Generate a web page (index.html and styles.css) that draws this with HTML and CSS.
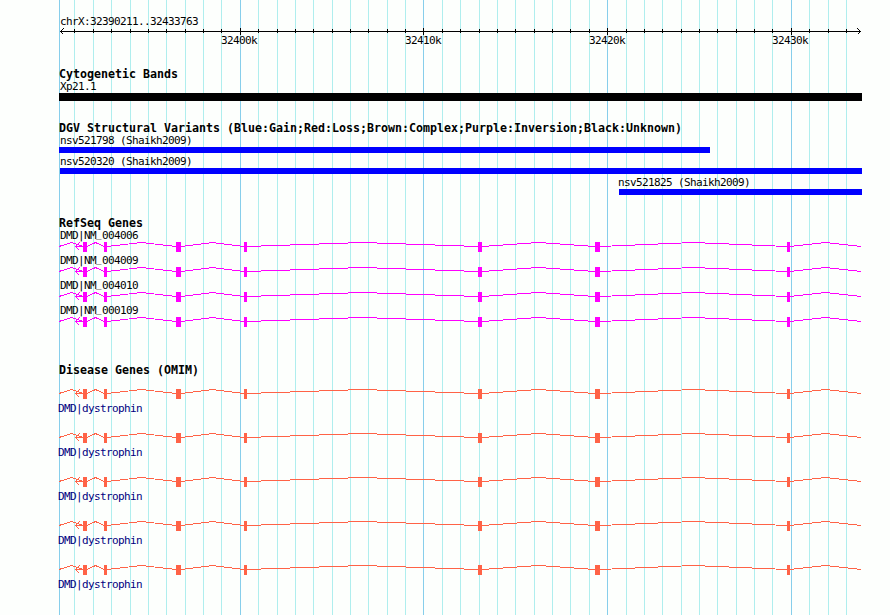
FILE: index.html
```
<!DOCTYPE html>
<html lang="en">
<head>
    <meta charset="UTF-8">
    <title>chrX:32390211..32433763</title>
    <link rel="stylesheet" href="styles.css">
</head>
<body>
    <!-- gene model shared by the RefSeq and OMIM tracks -->
    <svg class="defs" width="0" height="0">
        <symbol id="gene" viewBox="0 0 803 10">
            <path class="intron" d="M0 4.5L12.5 .5L24 4.5M28 4.5L36.5 .5L45 4.5M48 4.5L82.5 .5L117 4.5M122 4.5L153.5 .5L185 4.5M188 4.5L303.5 .5L419 4.5M423 4.5L479.5 .5L536 4.5M541 4.5L634.5 .5L728 4.5M731 4.5L766.5 .5L802 4.5"/>
            <path class="intron" d="M24 4.5H16.5M20.5 .5L16.5 4.5L20.5 8.5"/>
            <path class="exon" d="M24 0h4v10h-4zM45 0h3v10h-3zM117 0h5v10h-5zM185 0h3v10h-3zM419 0h4v10h-4zM536 0h5v10h-5zM728 0h3v10h-3z"/>
        </symbol>
    </svg>

    <div class="browser">
        <svg class="grid" width="890" height="615">
            <path class="minor" d="M74.5 0v615M93.5 0v615M111.5 0v615M130.5 0v615M148.5 0v615M166.5 0v615M185.5 0v615M203.5 0v615M221.5 0v615M258.5 0v615M277.5 0v615M295.5 0v615M313.5 0v615M332.5 0v615M350.5 0v615M368.5 0v615M387.5 0v615M405.5 0v615M442.5 0v615M460.5 0v615M479.5 0v615M497.5 0v615M515.5 0v615M534.5 0v615M552.5 0v615M570.5 0v615M589.5 0v615M626.5 0v615M644.5 0v615M662.5 0v615M681.5 0v615M699.5 0v615M717.5 0v615M736.5 0v615M754.5 0v615M772.5 0v615M809.5 0v615M828.5 0v615M846.5 0v615"/>
            <path class="major" d="M59.5 0v615M240.5 0v615M423.5 0v615M607.5 0v615M791.5 0v615"/>
        </svg>

        <div class="tracks">
            <div class="ruler">
                <div class="label">chrX:32390211..32433763</div>
                <svg class="axis" width="803" height="7">
                    <path d="M1 3.5H802M4.5 .5L1.5 3.5L4.5 6.5M798.5 .5L801.5 3.5L798.5 6.5"/>
                    <path d="M15.5 1v4M34.5 1v4M52.5 1v4M71.5 1v4M89.5 1v4M107.5 1v4M126.5 1v4M144.5 1v4M162.5 1v4M199.5 1v4M218.5 1v4M236.5 1v4M254.5 1v4M273.5 1v4M291.5 1v4M309.5 1v4M328.5 1v4M346.5 1v4M383.5 1v4M401.5 1v4M420.5 1v4M438.5 1v4M456.5 1v4M475.5 1v4M493.5 1v4M511.5 1v4M530.5 1v4M567.5 1v4M585.5 1v4M603.5 1v4M622.5 1v4M640.5 1v4M658.5 1v4M677.5 1v4M695.5 1v4M713.5 1v4M750.5 1v4M769.5 1v4M787.5 1v4"/>
                    <path d="M181.5 0v7M364.5 0v7M548.5 0v7M732.5 0v7"/>
                </svg>
                <div class="ticks">
                    <span>32400k</span>
                    <span>32410k</span>
                    <span>32420k</span>
                    <span>32430k</span>
                </div>
            </div>

            <div class="track bands">
                <h2>Cytogenetic Bands</h2>
                <div class="label">Xp21.1</div>
                <div class="band"></div>
            </div>

            <div class="track variants">
                <h2>DGV Structural Variants (Blue:Gain;Red:Loss;Brown:Complex;Purple:Inversion;Black:Unknown)</h2>
                <div class="variant nsv521798">
                    <div class="label">nsv521798 (Shaikh2009)</div>
                    <div class="gain"></div>
                </div>
                <div class="variant nsv520320">
                    <div class="label">nsv520320 (Shaikh2009)</div>
                    <div class="gain"></div>
                </div>
                <div class="variant nsv521825">
                    <div class="label">nsv521825 (Shaikh2009)</div>
                    <div class="gain"></div>
                </div>
            </div>

            <div class="track refseq">
                <h2>RefSeq Genes</h2>
                <div class="gene">
                    <div class="label">DMD|NM<span class="low">_</span>004006</div>
                    <svg width="803" height="10"><use href="#gene"/></svg>
                </div>
                <div class="gene">
                    <div class="label">DMD|NM<span class="low">_</span>004009</div>
                    <svg width="803" height="10"><use href="#gene"/></svg>
                </div>
                <div class="gene">
                    <div class="label">DMD|NM<span class="low">_</span>004010</div>
                    <svg width="803" height="10"><use href="#gene"/></svg>
                </div>
                <div class="gene">
                    <div class="label">DMD|NM<span class="low">_</span>000109</div>
                    <svg width="803" height="10"><use href="#gene"/></svg>
                </div>
            </div>

            <div class="track omim">
                <h2>Disease Genes (OMIM)</h2>
                <div class="gene">
                    <svg width="803" height="10"><use href="#gene"/></svg>
                    <div class="label">DMD|dystrophin</div>
                </div>
                <div class="gene">
                    <svg width="803" height="10"><use href="#gene"/></svg>
                    <div class="label">DMD|dystrophin</div>
                </div>
                <div class="gene">
                    <svg width="803" height="10"><use href="#gene"/></svg>
                    <div class="label">DMD|dystrophin</div>
                </div>
                <div class="gene">
                    <svg width="803" height="10"><use href="#gene"/></svg>
                    <div class="label">DMD|dystrophin</div>
                </div>
                <div class="gene">
                    <svg width="803" height="10"><use href="#gene"/></svg>
                    <div class="label">DMD|dystrophin</div>
                </div>
            </div>
        </div>
    </div>
</body>
</html>
```
FILE: styles.css
```
body {
    margin: 0;
    background: #fdfffd;
    color: #000;
    font-family: 'DejaVu Sans Mono', monospace;
    font-size: 11px;
    line-height: 12px;
    letter-spacing: -0.622px;
}
svg {
    display: block;
    shape-rendering: crispEdges;
}
.defs {
    position: absolute;
}
.browser {
    display: grid;
    width: 890px;
    height: 615px;
    overflow: hidden;
}
/* grid lines and tracks share one cell, the lines run behind */
.grid, .tracks {
    grid-area: 1 / 1;
}
.minor {
    stroke: #afeeee;
}
.major {
    stroke: #87ceeb;
}
.tracks {
    width: 803px;
    padding: 16px 0 0 59px;
}
.label {
    height: 12px;
    padding-left: 1px;
    white-space: nowrap;
}
/* keeps the underscore clear of the intron line below */
.low {
    font-size: 9px;
    line-height: 0;
    letter-spacing: 0.58px;
    vertical-align: 1px;
}
h2 {
    margin: 0;
    height: 14px;
    font-size: 11.63px;
    line-height: 14px;
    letter-spacing: 0;
    font-weight: bold;
    white-space: nowrap;
}
.axis path {
    fill: none;
    stroke: #000;
}
.ticks {
    display: grid;
    grid-template-columns: 184px 184px 183px 40px;
    padding-left: 162px;
    height: 12px;
}
.bands {
    margin-top: 20px;
}
.band {
    height: 8px;
    background: #000;
}
.variants {
    margin-top: 20px;
}
.variant {
    margin-bottom: 3px;
}
.gain {
    height: 6px;
    background: #0000ff;
}
.nsv521798 .gain {
    width: 651px;
}
.nsv520320 .gain {
    margin-left: 1px;
}
.nsv521825 {
    margin-left: 558px;
}
.nsv521825 .gain {
    margin-left: 2px;
}
.intron {
    fill: none;
    stroke: currentColor;
}
.exon {
    fill: currentColor;
}
.refseq {
    margin-top: 21px;
}
.refseq .gene {
    margin-bottom: 3px;
}
.refseq svg {
    color: #ff00ff;
}
.omim {
    margin-top: 36px;
}
.omim h2 {
    margin-bottom: 12px;
}
.omim .gene {
    margin-bottom: 18px;
}
.omim svg {
    color: #ff6347;
    margin-bottom: 4px;
}
.omim .label {
    padding-left: 0;
    margin-left: -1px;
    color: #000080;
}
```
